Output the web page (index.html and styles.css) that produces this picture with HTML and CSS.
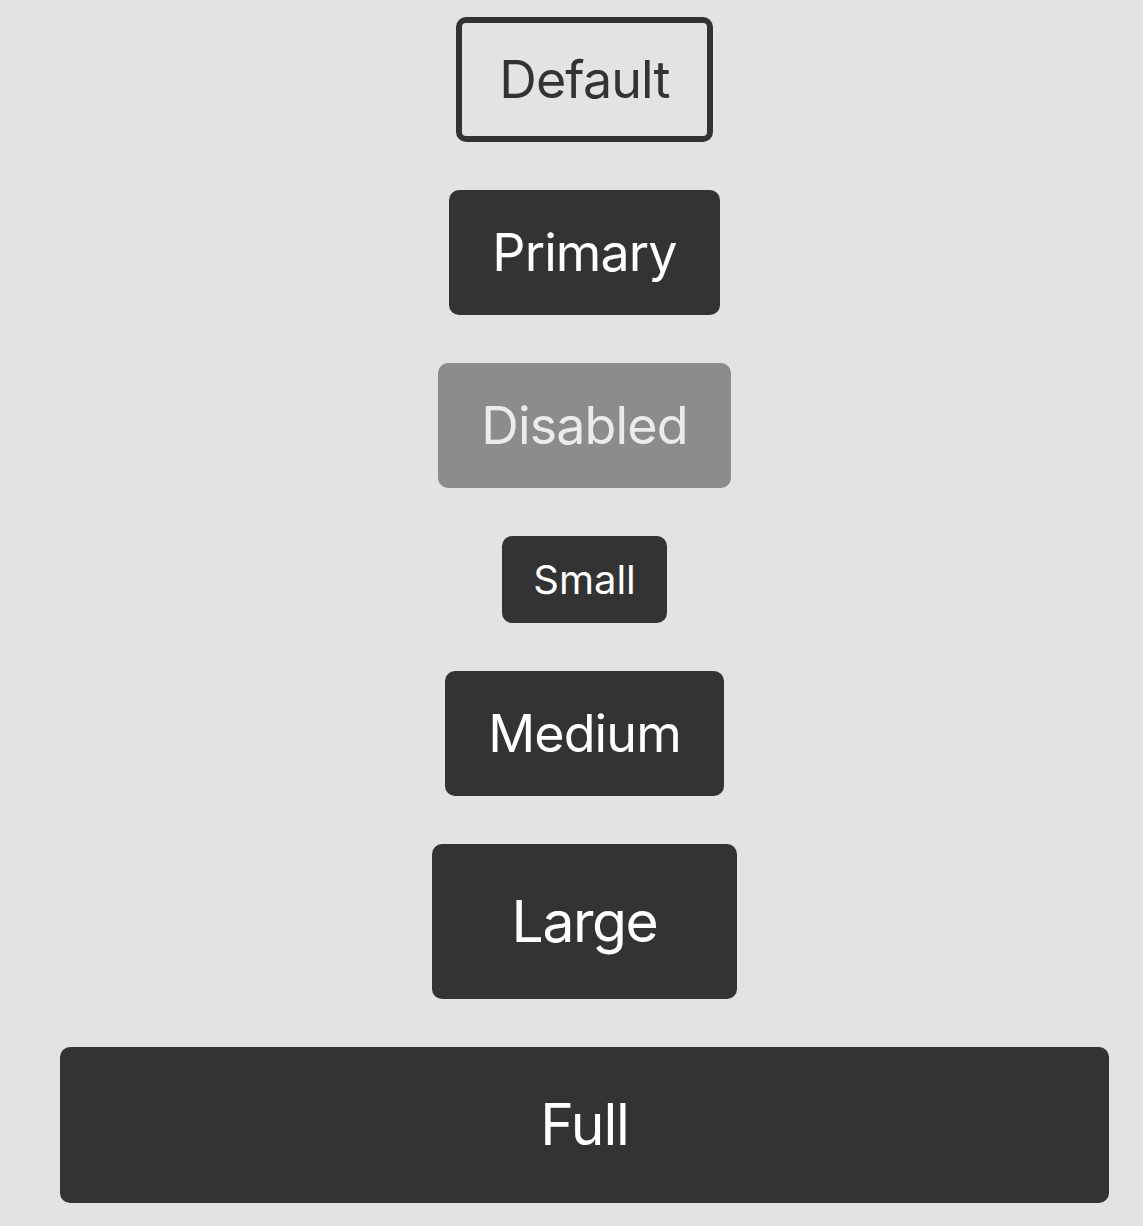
FILE: index.html
```html
<!DOCTYPE html>
<html lang="en">
<head>
<meta charset="utf-8">
<title>Buttons</title>
<link rel="stylesheet" href="styles.css">
</head>
<body>
<main class="stack">
  <button class="btn btn-default">Default</button>
  <button class="btn btn-primary">Primary</button>
  <button class="btn btn-disabled" disabled>Disabled</button>
  <button class="btn btn-small">Small</button>
  <button class="btn btn-medium">Medium</button>
  <button class="btn btn-large">Large</button>
  <button class="btn btn-full">Full</button>
</main>
</body>
</html>
```
FILE: styles.css
```css
html, body {
  margin: 0;
  background: #e3e3e3;
}

.stack {
  display: flex;
  flex-direction: column;
  align-items: center;
  gap: 48px;
  padding: 17px 34px 0 60px;
}

.btn {
  font-family: Inter, "Noto Sans", sans-serif;
  font-weight: 400;
  font-size: 52px;
  line-height: 65px;
  letter-spacing: -0.017em;
  padding: 30px 43px;
  border: none;
  border-radius: 10px;
  background: #333333;
  color: #ffffff;
  cursor: pointer;
  margin: 0;
}

.btn-default {
  background: transparent;
  border: 6px solid #333333;
  color: #333333;
  padding: 24px 37px;
}

.btn-disabled {
  background: #8c8c8c;
  color: #ebebeb;
  cursor: default;
}

.btn-small {
  font-size: 40px;
  line-height: 47px;
  letter-spacing: 0;
  padding: 20px 31px;
}

.btn-large {
  font-size: 57px;
  line-height: 71px;
  letter-spacing: -0.025em;
  padding: 42px 80px;
}

.btn-full {
  align-self: stretch;
  font-size: 57px;
  line-height: 72px;
  letter-spacing: -0.02em;
  padding: 42px 40px;
}
```
